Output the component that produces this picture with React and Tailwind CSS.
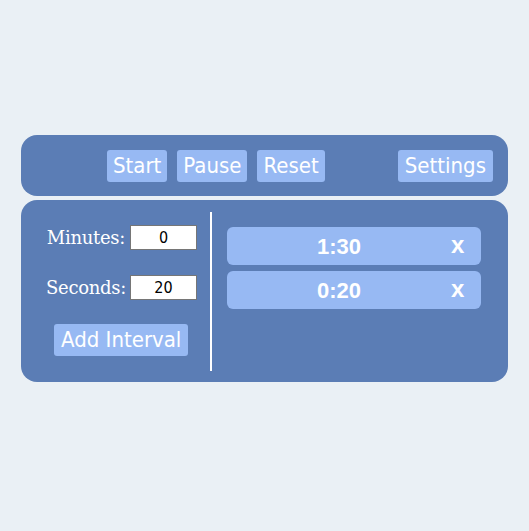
import React from 'react';

function Btn({ children, className = '' }) {
  return (
    <button
      className={
        'h-8 px-[6px] bg-[#97b9f3] text-white rounded-[3px] text-[22px] leading-none ' +
        className
      }
      style={{ fontFamily: '"DejaVu Sans Condensed", "DejaVu Sans", sans-serif' }}
    >
      {children}
    </button>
  );
}

function Interval({ time }) {
  return (
    <div
      className="h-[38px] bg-[#97b9f3] rounded-[6px] flex items-center text-white font-bold"
      style={{ fontFamily: '"Liberation Sans", Arial, sans-serif' }}
    >
      <span className="w-[224px] text-center text-[22px]">{time}</span>
      <span className="text-[24px] leading-none pb-[2px]">x</span>
    </div>
  );
}

function Field({ label, value }) {
  return (
    <div className="flex items-center gap-[5px]">
      <span
        className="text-white text-[18px] w-[79px] text-right whitespace-nowrap"
        style={{ fontFamily: '"DejaVu Serif", Georgia, serif', letterSpacing: '-0.3px' }}
      >
        {label}
      </span>
      <input
        readOnly
        value={value}
        className="w-[67px] h-[25px] bg-white border border-[#767676] text-center text-[16px] text-black outline-none"
        style={{ fontFamily: '"DejaVu Sans Condensed", "DejaVu Sans", sans-serif' }}
      />
    </div>
  );
}

export default function App() {
  return (
    <div className="w-[529px] h-[531px] bg-[#eaf0f5] pt-[135px] px-[21px]">
      <div className="h-[61px] bg-[#5b7db5] rounded-[16px] flex items-center pl-[86px] pr-[15px] gap-[10px]">
        <Btn>Start</Btn>
        <Btn>Pause</Btn>
        <Btn>Reset</Btn>
        <Btn className="ml-auto px-[7px]">Settings</Btn>
      </div>
      <div className="mt-[4px] h-[182px] bg-[#5b7db5] rounded-[16px] flex">
        <div className="w-[189px] flex flex-col items-start pt-[24px] pl-[25px]">
          <Field label="Minutes:" value="0" />
          <div className="h-[23px]" />
          <Field label="Seconds:" value="20" />
          <Btn className="mt-[23px] ml-[8px] px-[7px]">Add Interval</Btn>
        </div>
        <div className="w-[2px] bg-white mt-[12px] mb-[11px]" />
        <div className="flex-1 pl-[15px] pr-[27px] pt-[27px] flex flex-col gap-[6px]">
          <Interval time="1:30" />
          <Interval time="0:20" />
        </div>
      </div>
    </div>
  );
}
